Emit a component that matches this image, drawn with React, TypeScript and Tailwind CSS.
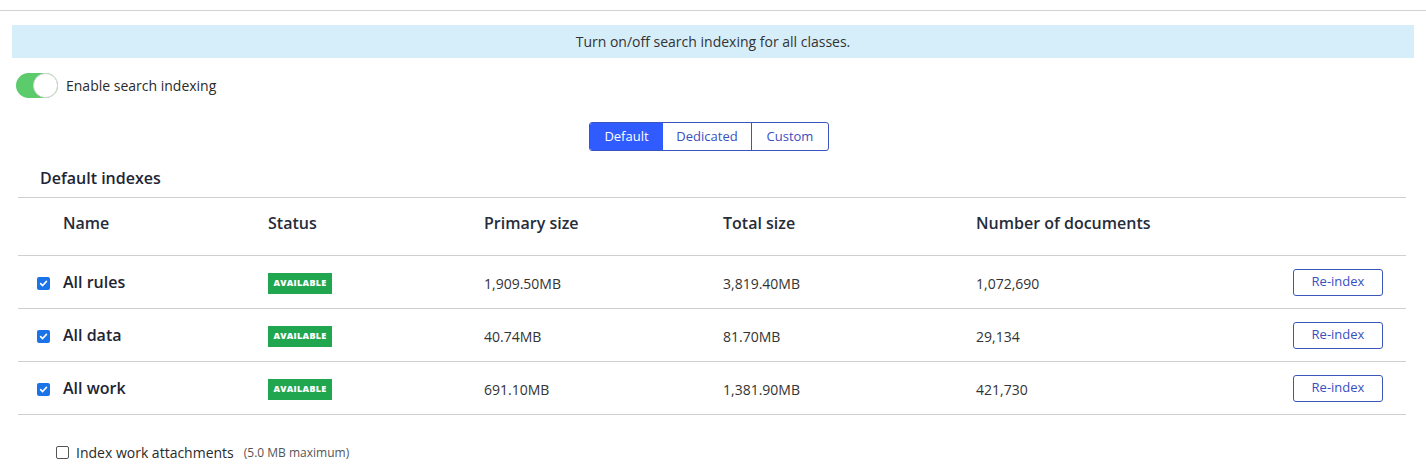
import React from "react";

const rows = [
  { name: "All rules", primary: "1,909.50MB", total: "3,819.40MB", docs: "1,072,690" },
  { name: "All data", primary: "40.74MB", total: "81.70MB", docs: "29,134" },
  { name: "All work", primary: "691.10MB", total: "1,381.90MB", docs: "421,730" },
];

const grid = "grid grid-cols-[45px_205px_216px_239px_253px_1fr] items-center";

function Check() {
  return (
    <span className="flex h-[13px] w-[13px] items-center justify-center rounded-[2px] bg-[#1a73e8]">
      <svg width="9" height="9" viewBox="0 0 10 10" fill="none">
        <path d="M1.8 5.2 L4 7.3 L8.3 2.6" stroke="white" strokeWidth="1.8" strokeLinecap="round" strokeLinejoin="round" />
      </svg>
    </span>
  );
}

export default function App() {
  return (
    <div className="w-[1426px] bg-white text-[#222] font-['Open_Sans',sans-serif]">
      <div className="h-[10px]" />
      <div className="border-t border-[#d2d2d2]" />
      <div className="mx-[12px] mr-[12px] mt-[14px] flex h-[33px] items-center justify-center bg-[#d6eefa] text-[14px] text-[#333]">
        Turn on/off search indexing for all classes.
      </div>
      <div className="mt-[15px] flex items-center pl-[16px]">
        <span className="relative h-[25px] w-[42px] rounded-full bg-[#5ccb6c]">
          <span className="absolute right-0 top-0 h-[25px] w-[25px] rounded-full border border-[#d6d6d6] bg-white" />
        </span>
        <span className="ml-[8px] text-[14px] text-[#2a2a2a]">Enable search indexing</span>
      </div>
      <div className="mt-[24px] flex justify-center pr-[8px]">
        <div className="flex h-[29px] overflow-hidden rounded-[3px] border border-[#3a55c0] text-[13px]">
          <span className="flex w-[73px] items-center justify-center bg-[#2f5bff] text-white">Default</span>
          <span className="flex w-[89px] items-center justify-center border-r border-[#3a55c0] text-[#3a4fc0]">Dedicated</span>
          <span className="flex w-[76px] items-center justify-center text-[#3a4fc0]">Custom</span>
        </div>
      </div>
      <div className="mx-[18px] w-[1388px]">
        <div className="flex h-[46px] items-end pb-[7px] pl-[22px] text-[16px] font-semibold text-[#1e2535]">
          Default indexes
        </div>
        <div className="border-t border-[#cfcfcf]" />
        <div className={`${grid} h-[58px] border-b border-[#cfcfcf] pb-[7px] text-[16px] font-semibold text-[#262c3a]`}>
          <span />
          <span>Name</span>
          <span>Status</span>
          <span>Primary size</span>
          <span>Total size</span>
          <span>Number of documents</span>
        </div>
        {rows.map((r) => (
          <div key={r.name} className={`${grid} h-[53px] border-b border-[#cfcfcf] text-[14px] text-[#333]`}>
            <span className="pl-[19px] pt-[2px]">
              <Check />
            </span>
            <span className="text-[16px] font-semibold text-[#1e2535]">{r.name}</span>
            <span>
              <span className="inline-flex h-[21px] w-[64px] items-center justify-center bg-[#1fa64e] text-[9px] font-extrabold tracking-[0.3px] text-white">
                AVAILABLE
              </span>
            </span>
            <span className="pt-[2px]">{r.primary}</span>
            <span className="pt-[2px]">{r.total}</span>
            <div className="flex items-center justify-between pr-[23px]">
              <span className="pt-[2px]">{r.docs}</span>
              <span className="flex h-[27px] w-[90px] items-center justify-center rounded-[3px] border border-[#3d57b8] text-[13px] text-[#3a4fc0]">
                Re-index
              </span>
            </div>
          </div>
        ))}
      </div>
      <div className="mt-[27px] flex items-center pl-[56px] pb-[8px]">
        <span className="h-[13px] w-[13px] rounded-[2px] border border-[#555] bg-white" />
        <span className="ml-[7px] text-[14px] text-[#2a2a2a]">Index work attachments</span>
        <span className="ml-[10px] text-[12px] text-[#555]">(5.0 MB maximum)</span>
      </div>
    </div>
  );
}
